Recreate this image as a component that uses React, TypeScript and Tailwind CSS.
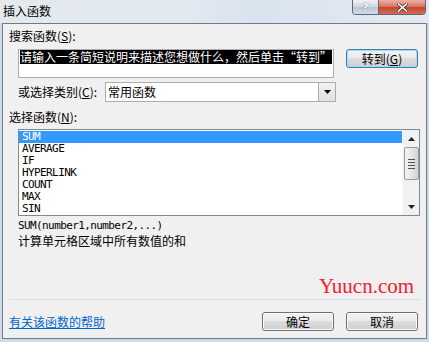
import React from "react";

const cjk = { fontFamily: '"Noto Sans CJK SC", "Noto Sans", sans-serif' };
const mono = { fontFamily: '"DejaVu Sans Mono", "Liberation Mono", monospace' };

function Btn({ children, focused = false }: { children: React.ReactNode; focused?: boolean }) {
  return (
    <div
      className={`w-[72px] h-[19px] rounded-[3px] border flex items-center justify-center text-[12px] leading-[12px] text-black ${
        focused ? "border-[#3c7fb1] shadow-[inset_0_0_0_1px_#9fdcf8]" : "border-[#707070] shadow-[inset_0_0_0_1px_#fcfcfc]"
      } bg-[linear-gradient(#f2f2f2_0%,#ebebeb_45%,#dddddd_50%,#cfcfcf_100%)]`}
      style={cjk}
    >
      {children}
    </div>
  );
}

const rows = ["SUM", "AVERAGE", "IF", "HYPERLINK", "COUNT", "MAX", "SIN"];

export default function App() {
  return (
    <div className="w-[429px] h-[342px] bg-[#cddcec] relative overflow-hidden" style={cjk}>
      {/* title bar */}
      <div className="h-[23px] relative bg-[linear-gradient(90deg,#e4e9ee_0%,#e2e9f1_40%,#d9e3ee_60%,#e3eaf2_100%)]">
        <div className="absolute left-[3px] top-[4px] text-[12px] leading-[14px] text-black" style={cjk}>
          插入函数
        </div>
        <div className="absolute right-[3px] top-0 flex h-[15px] border border-t-0 border-[#5d6977] rounded-b-[4px] overflow-hidden">
          <div className="w-[26px] h-full bg-[linear-gradient(#eef2f6,#cdd6e0_50%,#b9c5d2_51%,#d4dde7)] flex items-center justify-center border-r border-[#5d6977]">
            <span className="text-[11px] leading-[11px] font-bold text-white [text-shadow:0_0_1px_#333]" style={{ fontFamily: '"DejaVu Sans", sans-serif' }}>?</span>
          </div>
          <div className="w-[46px] h-full bg-[linear-gradient(#eab3a8,#d7725f_50%,#c4452f_51%,#d86a4e)] flex items-center justify-center">
            <svg width="11" height="9" viewBox="0 0 11 9">
              <path d="M1.5 1 L9.5 8 M9.5 1 L1.5 8" stroke="#3a3a3a" strokeWidth="3" strokeLinecap="square" />
              <path d="M1.5 1 L9.5 8 M9.5 1 L1.5 8" stroke="#ffffff" strokeWidth="1.6" strokeLinecap="square" />
            </svg>
          </div>
        </div>
      </div>

      {/* client */}
      <div className="ml-[2px] w-[425px] h-[316px] border border-[#6f7b89] bg-[#f0f0f0] flex flex-col text-black">
        <div className="ml-[6px] mt-[5px] h-[14px] text-[12px] leading-[14px]">
          搜索函数(<u>S</u>):
        </div>
        <div className="ml-[15px] mt-[6px] flex items-start gap-[12px]">
          <div className="w-[316px] h-[29px] border border-[#abadb3] bg-white pt-0 pl-[1px] text-[12px] leading-[14px]">
            <span className="bg-black text-white inline-block h-[14px] whitespace-nowrap">请输入一条简短说明来描述您想做什么，然后单击“转到”</span>
          </div>
          <Btn focused>
            转到(<u>G</u>)
          </Btn>
        </div>
        <div className="ml-[15px] mt-[4px] flex items-center">
          <div className="w-[87px] text-[12px] leading-[14px]">
            或选择类别(<u>C</u>):
          </div>
          <div className="w-[231px] h-[20px] border border-[#abadb3] bg-white flex items-center">
            <div className="flex-1 pl-[2px] text-[12px] leading-[14px]">常用函数</div>
            <div className="w-[17px] h-[18px] border-l border-[#abadb3] bg-[linear-gradient(#f2f2f2,#e0e0e0)] flex items-center justify-center">
              <svg width="7" height="4" viewBox="0 0 7 4">
                <path d="M0 0 H7 L3.5 4 Z" fill="#000" />
              </svg>
            </div>
          </div>
        </div>
        <div className="ml-[6px] mt-[8px] h-[14px] text-[12px] leading-[14px]">
          选择函数(<u>N</u>):
        </div>
        <div className="ml-[15px] mt-[5px] w-[402px] h-[87px] border border-[#828790] bg-white flex">
          <div className="flex-1 pt-[1px]">
            {rows.map((r, i) => (
              <div
                key={r}
                className={`h-[12px] leading-[12px] pl-[3px] text-[11px] tracking-[-0.6px] ${i === 0 ? "bg-[#3399ff] text-white" : "text-black"}`}
                style={mono}
              >
                {r}
              </div>
            ))}
          </div>
          <div className="w-[17px] h-full bg-[#f1f1f1] border-l border-[#fafafa] flex flex-col items-center">
            <div className="h-[17px] w-full flex items-center justify-center">
              <svg width="7" height="4" viewBox="0 0 7 4">
                <path d="M0 4 H7 L3.5 0 Z" fill="#222" />
              </svg>
            </div>
            <div className="w-[15px] h-[33px] rounded-[2px] border border-[#9a9a9a] bg-[linear-gradient(90deg,#f4f4f4,#e6e6e6_50%,#d2d2d2)] flex flex-col items-center justify-center gap-[2px]">
              <div className="w-[7px] h-[1px] bg-[#555]" />
              <div className="w-[7px] h-[1px] bg-[#555]" />
              <div className="w-[7px] h-[1px] bg-[#555]" />
              <div className="w-[7px] h-[1px] bg-[#555]" />
            </div>
            <div className="flex-1" />
            <div className="h-[17px] w-full flex items-center justify-center">
              <svg width="7" height="4" viewBox="0 0 7 4">
                <path d="M0 0 H7 L3.5 4 Z" fill="#222" />
              </svg>
            </div>
          </div>
        </div>
        <div className="ml-[15px] mt-[4px] h-[12px] leading-[12px] text-[11px] tracking-[-0.6px]" style={mono}>
          SUM(number1,number2,...)
        </div>
        <div className="ml-[15px] mt-[2px] h-[14px] leading-[14px] text-[12px]">计算单元格区域中所有数值的和</div>
        <div className="ml-[6px] mt-[51px] w-[411px] h-[1px] bg-[#d5dfe5]" />
        <div className="ml-[6px] mr-[8px] mt-[12px] flex items-center">
          <div className="flex-1 text-[12px] leading-[14px] text-[#0066cc] underline">有关该函数的帮助</div>
          <div className="flex gap-[12px]">
            <Btn>确定</Btn>
            <Btn>取消</Btn>
          </div>
        </div>
      </div>

      <div
        className="absolute left-[319px] top-[276px] text-[21px] leading-[21px] text-[#f2202e]"
        style={{ fontFamily: '"Liberation Serif", serif' }}
      >
        Yuucn.com
      </div>
    </div>
  );
}
